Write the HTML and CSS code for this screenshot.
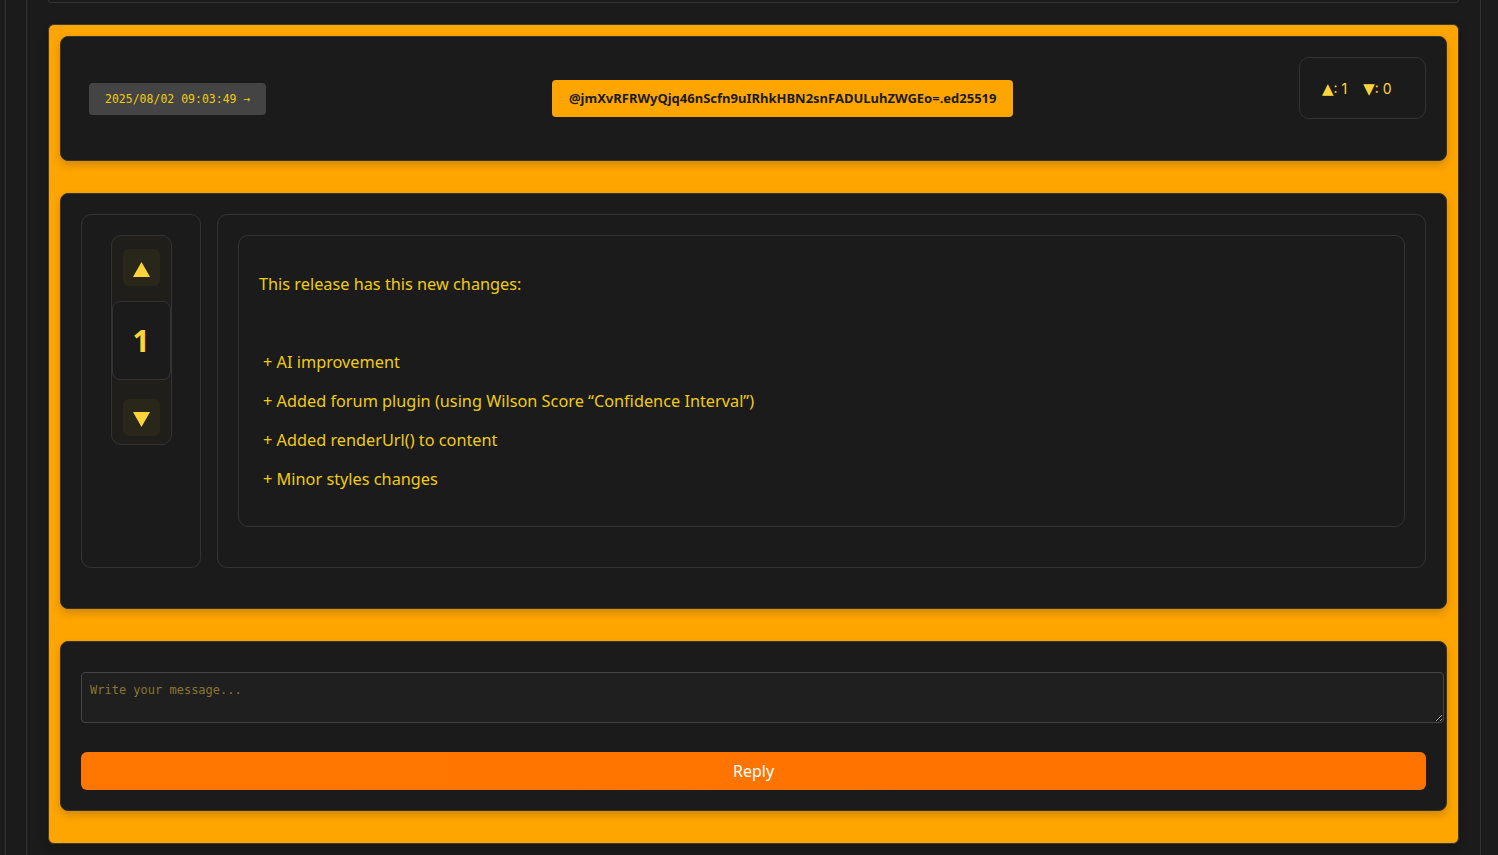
FILE: index.html
```html
<!DOCTYPE html>
<html lang="en">
<head>
  <meta charset="UTF-8" />
  <meta name="viewport" content="width=device-width, initial-scale=1.0" />
  <title>Forum - Release notes</title>
  <link rel="stylesheet" href="styles.css">
</head>
<body>
  <div class="layout">
    <div class="feed">
      <div class="post-prev"></div>

      <div class="post">
        <div class="card post-head">
          <span class="post-date">2025/08/02 09:03:49 →</span>
          <span class="post-author">@jmXvRFRWyQjq46nScfn9uIRhkHBN2snFADULuhZWGEo=.ed25519</span>
          <div class="post-score">
            <span><b class="tri">▲</b>: 1</span>
            <span><b class="tri">▼</b>: 0</span>
          </div>
        </div>

        <div class="card post-body">
          <div class="vote-col">
            <div class="vote-box">
              <button class="vote-btn" title="Upvote">
                <svg width="17" height="15" viewBox="0 0 17 15"><polygon points="8.5,0 17,15 0,15" fill="#ffd43b"/></svg>
              </button>
              <div class="vote-count">1</div>
              <button class="vote-btn down" title="Downvote">
                <svg width="17" height="15" viewBox="0 0 17 15"><polygon points="0,0 17,0 8.5,15" fill="#ffd43b"/></svg>
              </button>
            </div>
          </div>
          <div class="content-col">
            <div class="post-text">
              <p class="intro">This release has this new changes:</p>
              <p class="item">+ AI improvement</p>
              <p class="item">+ Added forum plugin (using Wilson Score “Confidence Interval”)</p>
              <p class="item">+ Added renderUrl() to content</p>
              <p class="item">+ Minor styles changes</p>
            </div>
          </div>
        </div>

        <div class="card reply-box">
          <textarea placeholder="Write your message..."></textarea>
          <button class="reply-btn">Reply</button>
        </div>
      </div>
    </div>
  </div>
</body>
</html>
```

FILE: styles.css
```css
body {
  margin: 0;
  background: #1b1b1b;
  font-family: "Noto Sans", sans-serif;
  color: #f0cc10;
}
.layout {
  margin-left: 5px;
  padding: 0 17px 0 20px;
  border-left: 1px solid #333;
  min-height: 100vh;
  box-sizing: border-box;
}
.feed {
  border-left: 1px solid #333;
  border-right: 1px solid #333;
  padding: 0 21px;
  min-height: 100vh;
  box-sizing: border-box;
}
.post-prev {
  height: 2px;
  border: 1px solid #333;
  border-top: none;
  border-radius: 0 0 8px 8px;
  margin-bottom: 21px;
}
.post {
  background: #ffa500;
  border: 1px solid #3a3a3a;
  border-radius: 6px;
  padding: 11px 11px 12px;
  display: flex;
  flex-direction: column;
  gap: 12px;
  box-shadow: 0 4px 10px rgba(0,0,0,0.2);
}
.card {
  background: #1b1b1b;
  border: 1px solid #333;
  border-radius: 8px;
  margin-bottom: 20px;
  box-shadow: 0 4px 8px rgba(0,0,0,0.18);
}
.post-head {
  display: flex;
  justify-content: space-between;
  align-items: center;
  padding: 20px;
  min-height: 125px;
  box-sizing: border-box;
}
.post-date {
  margin-left: 8px;
  background: #444;
  border-radius: 4px;
  padding: 0 16px;
  height: 32px;
  line-height: 32px;
  font-family: "DejaVu Sans Mono", monospace;
  font-size: 11.5px;
  color: #f0cc10;
}
.post-author {
  background: #ffa500;
  color: #1b1b1b;
  font-weight: bold;
  font-size: 13px;
  border-radius: 4px;
  padding: 0 17px;
  height: 37px;
  line-height: 37px;
}
.post-score {
  align-self: flex-start;
  border: 1px solid #333;
  border-radius: 10px;
  padding: 21px 0 19px 22px;
  width: 127px;
  height: 62px;
  box-sizing: border-box;
  font-family: Inter, sans-serif;
  font-size: 14px;
  line-height: 20px;
  color: #ffd43b;
  display: flex;
}
.post-score span {
  margin-right: 16px;
}
.post-score .tri {
  font-family: "DejaVu Sans", sans-serif;
  font-weight: normal;
  font-size: 15px;
}
.post-body {
  display: flex;
  gap: 16px;
  padding: 20px 20px 40px;
}
.vote-col {
  width: 120px;
  box-sizing: border-box;
  border: 1px solid #333;
  border-radius: 10px;
  padding-top: 20px;
  display: flex;
  justify-content: center;
  align-items: flex-start;
}
.vote-box {
  width: 61px;
  box-sizing: border-box;
  border: 1px solid #333;
  border-radius: 10px;
  background: #1f1e1b;
  padding: 13px 0 8px;
  display: flex;
  flex-direction: column;
  align-items: center;
}
.vote-btn {
  width: 37px;
  height: 37px;
  border: none;
  border-radius: 6px;
  background: #29271a;
  display: flex;
  align-items: center;
  justify-content: center;
  padding: 4px 0 0;
  cursor: pointer;
}
.vote-btn.down {
  margin-top: 19px;
}
.vote-count {
  margin-top: 15px;
  width: 59px;
  height: 79px;
  box-sizing: border-box;
  border: 1px solid #333;
  border-radius: 8px;
  background: #1b1b1b;
  font-weight: bold;
  font-size: 30px;
  color: #ffd43b;
  display: flex;
  align-items: center;
  justify-content: center;
}
.content-col {
  flex: 1;
  border: 1px solid #333;
  border-radius: 10px;
  padding: 20px;
}
.post-text {
  border: 1px solid #333;
  border-radius: 10px;
  padding: 19px 20px 17px;
  margin-bottom: 20px;
  font-size: 16.3px;
  line-height: 19.5px;
}
.post-text p {
  margin: 19.5px 0;
}
.post-text .intro {
  margin-bottom: 58.5px;
}
.post-text .item {
  padding-left: 4px;
}
.reply-box {
  padding: 20px;
}
textarea {
  display: block;
  width: 100%;
  height: 31px;
  margin-top: 10px;
  padding: 10px 8px 8px;
  background: #1f1f1f;
  border: 1px solid #444;
  border-radius: 4px;
  font-family: "DejaVu Sans Mono", monospace;
  font-size: 12px;
  color: #f0cc10;
  resize: vertical;
}
textarea::placeholder {
  color: #8a7632;
}
.reply-btn {
  display: block;
  width: 100%;
  height: 38px;
  margin-top: 29px;
  border: none;
  border-radius: 6px;
  background: linear-gradient(90deg, #ff7600, #ff7300);
  color: #fff;
  font-family: "Noto Sans", sans-serif;
  font-size: 16px;
  cursor: pointer;
}
```
